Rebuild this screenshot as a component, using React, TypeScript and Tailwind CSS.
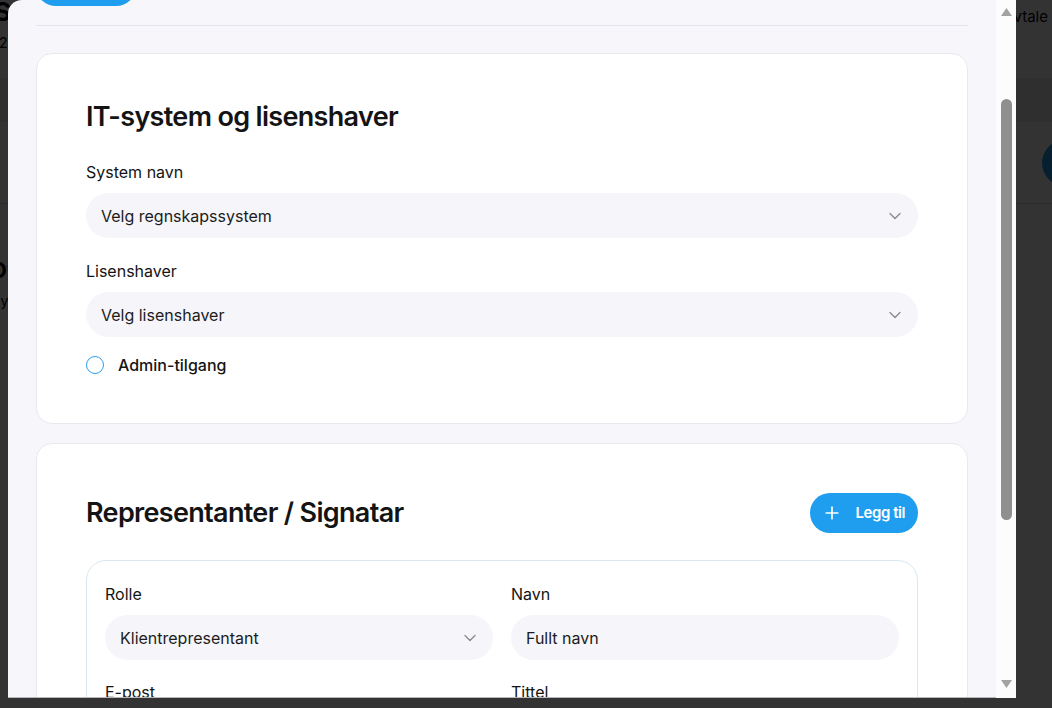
import React from "react";
import { ChevronDown, Plus } from "lucide-react";

interface SelectProps {
  value: string;
  chevron?: boolean;
}

const FieldBox: React.FC<SelectProps> = ({ value, chevron = true }) => {
  return (
    <div className="h-[45px] rounded-full bg-[#f5f5fa] pl-[15px] pr-[13px] flex items-center justify-between">
      <span className="text-[16px] text-[#1c1c1c]">{value}</span>
      {chevron && <ChevronDown size={20} strokeWidth={1.6} className="text-[#8a8a8f]" />}
    </div>
  );
};

const Field: React.FC<{ label: string; value: string; chevron?: boolean }> = ({
  label,
  value,
  chevron,
}) => {
  return (
    <div className="flex flex-col">
      <label className="text-[16px] leading-[22px] font-normal text-[#141414] mb-[10px]">
        {label}
      </label>
      <FieldBox value={value} chevron={chevron} />
    </div>
  );
};

const BackgroundPage = () => {
  return (
    <div className="w-full text-black">
      <div className="h-[78px] flex justify-between">
        <div className="flex flex-col">
          <h1 className="text-[26px] leading-[24px] font-bold -ml-[6px]">Samarbeid</h1>
          <p className="text-[14px] mt-[8px] -ml-[1px]">21 avtaler</p>
        </div>
        <div className="pt-[6px] pr-[4px] text-[15px]">Ny avtale</div>
      </div>
      <div className="h-[44px] bg-[#e8e8e8]" />
      <div className="h-[82px] border-b border-[#dcdcdc] flex justify-end items-center">
        <div className="w-[46px] h-[46px] rounded-full bg-[#1e9ef0] -mr-[36px]" />
      </div>
      <div className="pt-[52px] -ml-[10px]">
        <h2 className="text-[22px] font-bold leading-[28px]">Oversikt</h2>
        <p className="text-[14px] mt-[6px]">Nyeste avtaler</p>
      </div>
    </div>
  );
};

const Scrollbar = () => {
  return (
    <div className="w-5 h-full bg-[#fcfcfc] flex flex-col items-center">
      <svg width="11" height="8" viewBox="0 0 11 8" className="mt-[8px]">
        <polygon points="5.5,0 11,8 0,8" fill="#a3a3a3" />
      </svg>
      <div className="mt-[83px] w-[11px] h-[421px] rounded-full bg-[#8f8f8f]" />
      <div className="flex-1" />
      <svg width="11" height="8" viewBox="0 0 11 8" className="mb-[10px]">
        <polygon points="0,0 11,0 5.5,8" fill="#a3a3a3" />
      </svg>
    </div>
  );
};

export default function App() {
  return (
    <div className="relative h-[708px] w-full overflow-hidden bg-white font-['Inter',sans-serif]">
      <BackgroundPage />
      <div className="absolute inset-0 bg-black/80" />

      <div className="absolute left-2 top-0 w-[1008px] h-[698px] rounded-tl-[14px] overflow-hidden bg-[#f7f7fb] flex">
        <div className="flex-1 h-full overflow-hidden border-b border-[#b8b8bc]">
          <div className="-mt-[34px] px-7">
            <button className="block w-[100px] h-10 rounded-full bg-[#1f9ef0]" />
            <div className="mt-[19px] h-px bg-[#e3e5ec]" />

            {/* IT-system */}
            <section className="mt-[27px] bg-white border border-[#e8e8ef] rounded-2xl px-[49px] pt-[47px] pb-[47px]">
              <h2 className="text-[27px] leading-8 font-semibold tracking-[-0.025em] text-[#141414] mb-[28px]">
                IT-system og lisenshaver
              </h2>
              <div className="flex flex-col gap-[22px]">
                <Field label="System navn" value="Velg regnskapssystem" />
                <Field label="Lisenshaver" value="Velg lisenshaver" />
              </div>
              <div className="mt-[17px] flex items-center gap-[14px] h-[22px]">
                <span className="w-[18px] h-[18px] rounded-full border-[1.5px] border-[#2a9df0]" />
                <span className="text-[16px] font-medium text-[#141414]">Admin-tilgang</span>
              </div>
            </section>

            {/* Representanter */}
            <section className="mt-[19px] bg-white border border-[#e8e8ef] rounded-2xl px-[49px] pt-[49px] pb-10">
              <div className="flex items-center justify-between">
                <h2 className="text-[27px] leading-8 font-semibold tracking-[-0.025em] text-[#141414]">
                  Representanter / Signatar
                </h2>
                <button className="h-10 rounded-full bg-[#1f9ef0] pl-3 pr-[13px] flex items-center gap-[14px] text-white">
                  <Plus size={20} strokeWidth={2} />
                  <span className="text-[15px] font-semibold tracking-[-0.03em]">Legg til</span>
                </button>
              </div>

              <div className="mt-[27px] border border-[#d9e8f0] rounded-[20px] px-[18px] pt-[22px] pb-6">
                <div className="grid grid-cols-2 gap-x-[18px] gap-y-[21px]">
                  <Field label="Rolle" value="Klientrepresentant" />
                  <Field label="Navn" value="Fullt navn" chevron={false} />
                  <Field label="E-post" value="navn@firma.no" chevron={false} />
                  <Field label="Tittel" value="Stilling" chevron={false} />
                </div>
              </div>
            </section>
          </div>
        </div>
        <Scrollbar />
      </div>
    </div>
  );
}
